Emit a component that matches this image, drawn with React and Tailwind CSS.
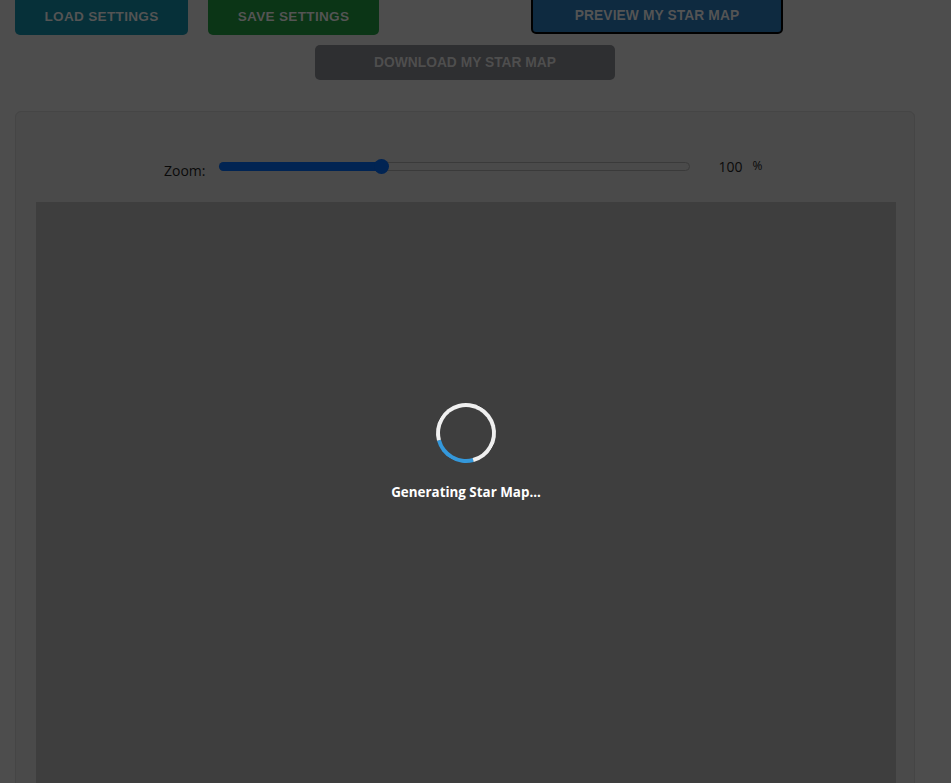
import React from 'react';

export default function App() {
    return (
        <div className="h-[783px] w-full bg-[#4d4d4d] overflow-hidden" style={{ fontFamily: '"Liberation Sans", Arial, sans-serif' }}>
            {/* Top actions */}
            <div className="flex items-start h-[35px]">
                <button className="ml-[15px] -mt-[5px] w-[173px] h-[40px] rounded-[5px] bg-[#063039] text-[#545454] font-bold text-[13.6px] tracking-[0.3px] pt-[5px]">
                    LOAD SETTINGS
                </button>
                <button className="ml-[20px] -mt-[5px] w-[171px] h-[40px] rounded-[5px] bg-[#0b3516] text-[#545454] font-bold text-[13.6px] tracking-[0.3px] pt-[5px]">
                    SAVE SETTINGS
                </button>
                <button className="ml-[152px] -mt-[7px] w-[252px] h-[41px] rounded-[5px] border-2 border-black bg-[#0e2a40] text-[#545454] font-bold text-[13.8px] tracking-[0.1px] pt-[5px]">
                    PREVIEW MY STAR MAP
                </button>
            </div>

            <div className="flex justify-center w-[930px] mt-[10px]">
                <button className="w-[300px] h-[35px] rounded-[5px] bg-[#2e2f31] text-[#4e4e4e] font-bold text-[13.8px] pt-[1px]">
                    DOWNLOAD MY STAR MAP
                </button>
            </div>

            {/* Preview panel */}
            <div className="ml-[15px] mt-[31px] w-[900px] h-[720px] rounded-[6px] border border-[#454545] bg-[#4a4a4a] px-[20px] pt-[43px]">
                <div className="flex items-center h-[22px] pl-[128px]" style={{ fontFamily: '"Open Sans", sans-serif' }}>
                    <span className="text-[14px] text-[#0a0a0a] mt-[8px]">Zoom:</span>
                    <div className="relative ml-[13px] w-[471px] h-[9px] rounded-full border border-[#3a3a3a]">
                        <div className="absolute left-[-1px] top-[-1px] h-[9px] w-[163px] rounded-full bg-[#012453]" />
                        <div className="absolute left-[154px] top-[-4px] w-[15px] h-[15px] rounded-full bg-[#012453]" />
                    </div>
                    <span className="ml-[29px] text-[14px] text-[#0a0a0a]">100</span>
                    <span className="ml-[10px] text-[12px] text-[#0a0a0a]">%</span>
                </div>

                <div className="mt-[25px] w-[860px] h-[620px] bg-[#3e3e3e] flex flex-col items-center pt-[201px]">
                    <div className="w-[60px] h-[60px] rounded-full border-4 border-[#f0f0f0] border-b-[#3498db] rotate-[30deg]" />
                    <div className="mt-[19px] text-[13.4px] font-bold text-white" style={{ fontFamily: '"Open Sans", sans-serif' }}>
                        Generating Star Map...
                    </div>
                </div>
            </div>
        </div>
    );
}
